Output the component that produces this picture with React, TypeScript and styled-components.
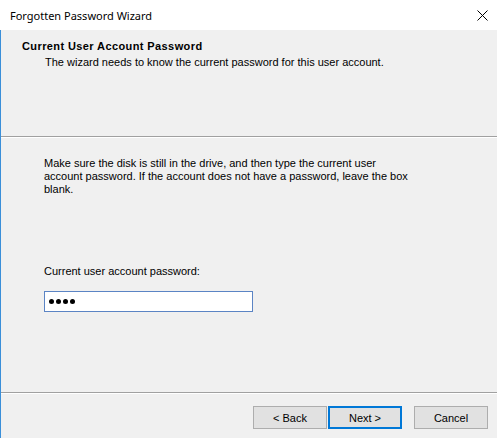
import React from "react";
import styled, { createGlobalStyle } from "styled-components";

const GlobalStyle = createGlobalStyle`
  html, body { margin: 0; padding: 0; background: #f0f0f0; }
  body { font-family: Tahoma, "Liberation Sans", Arial, sans-serif; }
`;

const Window = styled.div`
  width: 497px;
  height: 438px;
  display: flex;
  flex-direction: column;
  box-sizing: border-box;
  overflow: hidden;
  background: #f0f0f0;
`;

const TitleBar = styled.div`
  height: 30px;
  flex: none;
  background: #ffffff;
  display: flex;
  align-items: center;
  justify-content: space-between;
  padding: 0 9px 0 10px;
  font-family: "Segoe UI", "Noto Sans", "Liberation Sans", sans-serif;
  font-size: 11px;
  color: #000;
`;

const CloseIcon = styled.svg`
  width: 11px;
  height: 11px;
`;

const Frame = styled.div`
  flex: 1;
  display: flex;
  flex-direction: column;
  border-left: 1px solid #3a8fd9;
  font-family: "Liberation Sans", Arial, sans-serif;
  font-size: 11px;
  color: #000;
`;

const Header = styled.div`
  height: 106px;
  flex: none;
  padding: 10px 0 0 21px;
  box-sizing: border-box;
`;

const Heading = styled.div`
  font-weight: bold;
  font-size: 11px;
  line-height: 13px;
  letter-spacing: 0.4px;
`;

const SubHeading = styled.div`
  padding-left: 23px;
  line-height: 13px;
  margin-top: 3px;
`;

const Separator = styled.div`
  flex: none;
  height: 1px;
  background: #a0a0a0;
  border-bottom: 1px solid #ffffff;
`;

const Body = styled.div`
  flex: 1;
  padding: 19px 0 0 43px;
  display: flex;
  flex-direction: column;
`;

const Paragraph = styled.p`
  margin: 0;
  line-height: 13px;
  white-space: nowrap;
`;

const Label = styled.div`
  margin-top: 69px;
  line-height: 13px;
`;

const PasswordBox = styled.div`
  margin-top: 13px;
  width: 209px;
  height: 21px;
  box-sizing: border-box;
  background: #ffffff;
  border: 1px solid #5b84c4;
  display: flex;
  align-items: center;
  padding-left: 4px;
  gap: 2px;
`;

const Dot = styled.span`
  width: 5px;
  height: 5px;
  border-radius: 50%;
  background: #000;
`;

const ButtonRow = styled.div`
  flex: none;
  height: 44px;
  display: flex;
  align-items: flex-start;
  padding: 12px 9px 0 0;
  box-sizing: border-box;
  justify-content: flex-end;
`;

const Button = styled.button<{ $primary?: boolean; $gap?: number }>`
  width: 74px;
  height: 23px;
  box-sizing: border-box;
  margin-left: ${(p) => p.$gap ?? 0}px;
  background: #e1e1e1;
  border: ${(p) => (p.$primary ? "2px solid #0078d7" : "1px solid #adadad")};
  font-family: "Liberation Sans", Arial, sans-serif;
  font-size: 11px;
  color: #000;
  padding: 0;
`;

export default function App() {
  return (
    <>
      <GlobalStyle />
      <Window>
        <TitleBar>
          <span>Forgotten Password Wizard</span>
          <CloseIcon viewBox="0 0 11 11">
            <path d="M0.5 0.5 L10.5 10.5 M10.5 0.5 L0.5 10.5" stroke="#000" strokeWidth="1" fill="none" />
          </CloseIcon>
        </TitleBar>
        <Frame>
          <Header>
            <Heading>Current User Account Password</Heading>
            <SubHeading>The wizard needs to know the current password for this user account.</SubHeading>
          </Header>
          <Separator />
          <Body>
            <Paragraph>
              Make sure the disk is still in the drive, and then type the current user
              <br />
              account password. If the account does not have a password, leave the box
              <br />
              blank.
            </Paragraph>
            <Label>Current user account password:</Label>
            <PasswordBox>
              <Dot />
              <Dot />
              <Dot />
              <Dot />
            </PasswordBox>
          </Body>
          <Separator />
          <ButtonRow>
            <Button>&lt; Back</Button>
            <Button $primary $gap={1}>Next &gt;</Button>
            <Button $gap={12}>Cancel</Button>
          </ButtonRow>
        </Frame>
      </Window>
    </>
  );
}
